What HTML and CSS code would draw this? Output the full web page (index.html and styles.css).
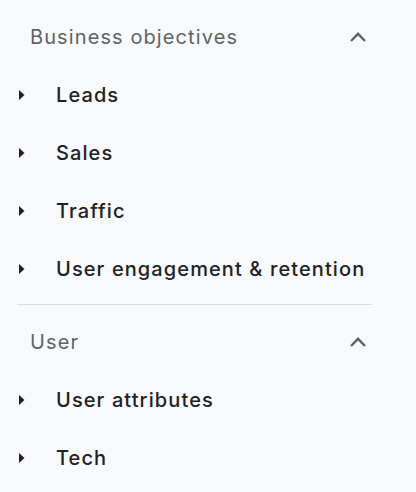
FILE: index.html
```html
<!DOCTYPE html>
<html>
<head>
<meta charset="utf-8">
<link rel="stylesheet" href="styles.css">
</head>
<body>
<div class="panel">
  <section class="group">
    <div class="group-head">
      <span class="group-title">Business objectives</span>
      <svg class="chev" width="18" height="12" viewBox="0 0 18 12"><path d="M2 10 9 2.8 16 10" fill="none" stroke="#5f6368" stroke-width="2.4"/></svg>
    </div>
    <div class="item"><svg class="tri" width="7" height="12" viewBox="0 0 7 12"><path d="M1 1 6.5 6 1 11z" fill="#202124"/></svg><span>Leads</span></div>
    <div class="item"><svg class="tri" width="7" height="12" viewBox="0 0 7 12"><path d="M1 1 6.5 6 1 11z" fill="#202124"/></svg><span>Sales</span></div>
    <div class="item"><svg class="tri" width="7" height="12" viewBox="0 0 7 12"><path d="M1 1 6.5 6 1 11z" fill="#202124"/></svg><span>Traffic</span></div>
    <div class="item"><svg class="tri" width="7" height="12" viewBox="0 0 7 12"><path d="M1 1 6.5 6 1 11z" fill="#202124"/></svg><span>User engagement &amp; retention</span></div>
  </section>
  <section class="group">
    <div class="group-head">
      <span class="group-title">User</span>
      <svg class="chev" width="18" height="12" viewBox="0 0 18 12"><path d="M2 10 9 2.8 16 10" fill="none" stroke="#5f6368" stroke-width="2.4"/></svg>
    </div>
    <div class="item"><svg class="tri" width="7" height="12" viewBox="0 0 7 12"><path d="M1 1 6.5 6 1 11z" fill="#202124"/></svg><span>User attributes</span></div>
    <div class="item"><svg class="tri" width="7" height="12" viewBox="0 0 7 12"><path d="M1 1 6.5 6 1 11z" fill="#202124"/></svg><span>Tech</span></div>
  </section>
</div>
</body>
</html>
```
FILE: styles.css
```css
html, body {
  margin: 0;
  padding: 0;
  background: #f8f9fa;
}
body {
  font-family: Inter, Roboto, sans-serif;
}
.panel {
  width: 355px;
  margin-left: 17px;
  padding-top: 8px;
}
.group + .group {
  border-top: 1px solid #dadce0;
  margin-top: 6px;
  padding-top: 8px;
}
.group-head {
  height: 58px;
  display: flex;
  align-items: center;
  justify-content: space-between;
  padding-left: 13px;
}
.group-title {
  font-size: 20px;
  color: #5f6368;
  letter-spacing: 1.1px;
}
.chev {
  margin-right: 5px;
}
.item {
  height: 58px;
  display: flex;
  align-items: center;
  font-size: 20px;
  font-weight: 500;
  color: #202124;
  letter-spacing: 1.1px;
}
.tri {
  margin-left: 1px;
  margin-right: 31px;
}
```
